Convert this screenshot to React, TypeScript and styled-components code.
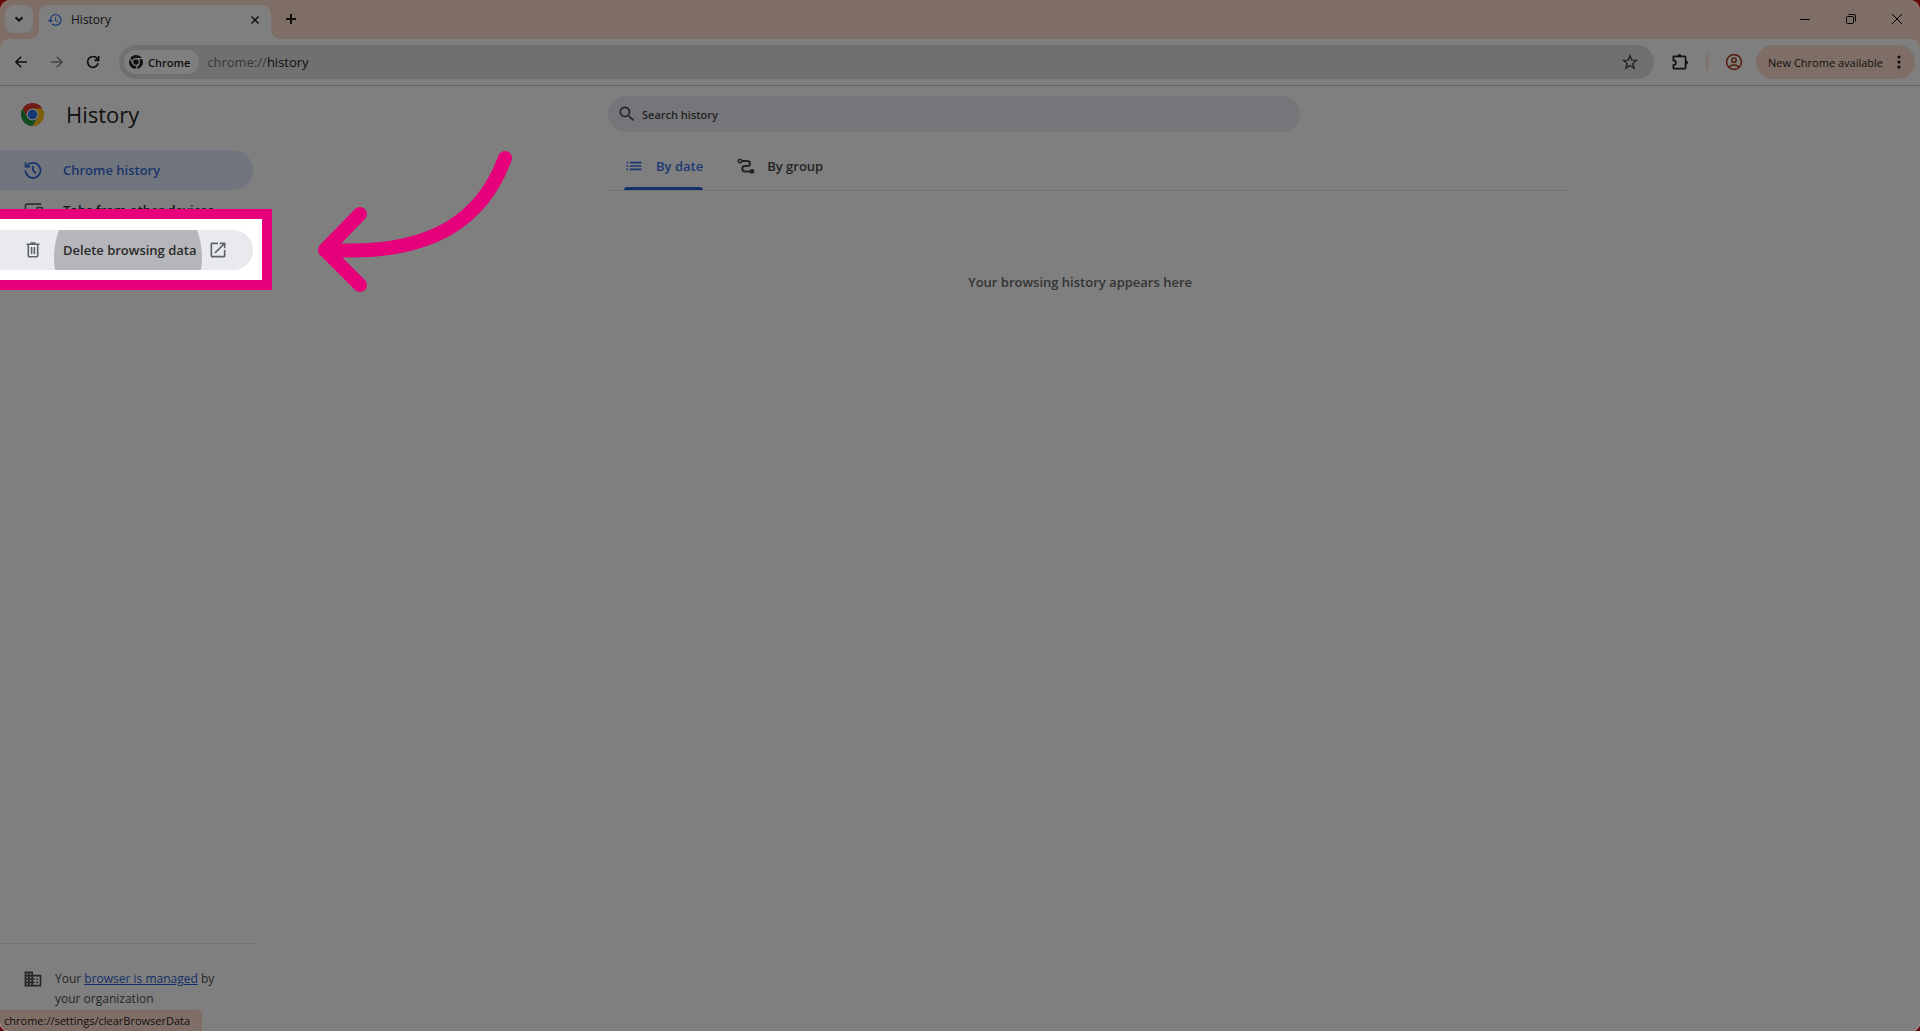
import React from "react";
import styled, { createGlobalStyle } from "styled-components";
import { MdHistory, MdDevices, MdLaunch, MdDomain, MdSearch, MdList } from "react-icons/md";

const GlobalStyle = createGlobalStyle`
  *, *::before, *::after { box-sizing: border-box; }
  body { margin: 0; background: #640a0f; }
  body, button, input { font-family: "Open Sans", "Noto Sans", sans-serif; }
  button { border: 0; padding: 0; background: none; color: inherit; }
  svg { display: block; flex: none; }
`;

const Window = styled.div`
  position: relative;
  display: flex;
  flex-direction: column;
  min-height: 100vh;
  overflow: hidden;
  border-radius: 10px 10px 8px 8px;
  background: #ffdccb;
  color: #1f1f1f;
`;

const TitleBar = styled.header`
  display: flex;
  align-items: flex-end;
  height: 39px;
  padding-left: 5px;
`;

const TabSearch = styled.button`
  display: grid;
  place-items: center;
  width: 28px;
  height: 28px;
  margin: 0 6px 6px 0;
  border-radius: 9px;
  background: #fff;
`;

const Tab = styled.div`
  position: relative;
  display: flex;
  align-items: center;
  width: 232px;
  height: 34px;
  padding: 0 8px 5px;
  border-radius: 9px 9px 0 0;
  background: #fff;
  font-size: 12px;

  &::before, &::after {
    content: "";
    position: absolute;
    bottom: 0;
    width: 10px;
    height: 10px;
  }
  &::before { left: -10px; background: radial-gradient(circle at 0 0, transparent 10px, #fff 10px); }
  &::after { right: -10px; background: radial-gradient(circle at 100% 0, transparent 10px, #fff 10px); }
`;

const TabTitle = styled.span`
  flex: 1;
  padding-left: 8px;
`;

const SmallButton = styled.button`
  display: grid;
  place-items: center;
  width: 16px;
  height: 16px;
`;

const NewTab = styled.button`
  display: grid;
  place-items: center;
  width: 28px;
  height: 28px;
  margin: 0 auto 6px 6px;
`;

const WindowControls = styled.div`
  display: flex;
  align-self: stretch;
`;

const WindowButton = styled.button`
  display: grid;
  place-items: center;
  width: 46px;
  height: 38px;
  color: #000;
`;

const Toolbar = styled.div`
  display: flex;
  align-items: center;
  height: 47px;
  padding: 0 5px 0 3px;
  border-bottom: 1px solid #c8c8c8;
  border-radius: 9px 9px 0 0;
  background: #fff;
`;

const NavButton = styled.button<{ $muted?: boolean }>`
  display: grid;
  place-items: center;
  width: 36px;
  height: 34px;
  color: ${(p) => (p.$muted ? "#8c8c8c" : "#1f1f1f")};
`;

const Omnibox = styled.div`
  display: flex;
  flex: 1;
  align-items: center;
  height: 34px;
  margin: 0 8px;
  padding: 0 16px 0 5px;
  border-radius: 17px;
  background: #e1e1e1;
`;

const SiteChip = styled.button`
  display: flex;
  align-items: center;
  gap: 5px;
  height: 24px;
  padding: 0 9px 0 5px;
  border-radius: 12px;
  background: #fff;
  font-size: 11px;
  font-weight: 600;
`;

const Address = styled.div`
  flex: 1;
  padding-left: 8px;
  font-size: 13px;
  color: #707070;

  b { font-weight: 400; color: #1f1f1f; }
`;

const Divider = styled.span`
  width: 2px;
  height: 16px;
  margin: 0 8px;
  background: #ffdccb;
`;

const UpdateButton = styled.button`
  display: flex;
  align-items: center;
  gap: 12px;
  height: 34px;
  margin-left: 4px;
  padding: 0 12px;
  border-radius: 17px;
  background: #ffdccb;
  font-size: 11px;
`;

const Page = styled.div`
  display: flex;
  flex: 1;
  background: #fff;
`;

const Sidebar = styled.aside`
  display: flex;
  flex-direction: column;
  width: 256px;
`;

const Brand = styled.div`
  display: flex;
  align-items: center;
  gap: 22px;
  height: 64px;
  padding: 0 0 8px 21px;
`;

const Heading = styled.h1`
  margin: 0;
  font-size: 22px;
  font-weight: 500;
  line-height: 28px;
`;

const NavItem = styled.a<{ $tone?: "active" | "pressed" }>`
  position: relative;
  display: flex;
  align-items: center;
  height: 40px;
  margin-right: 3px;
  padding-left: 23px;
  border-radius: 0 20px 20px 0;
  background: ${(p) => (p.$tone === "active" ? "#e3edfd" : p.$tone === "pressed" ? "#e8eaed" : "transparent")};
  color: ${(p) => (p.$tone === "active" ? "#3367d6" : "#2a2a2a")};
  font-size: 13px;
  font-weight: 600;
  text-decoration: none;
  white-space: nowrap;
`;

const NavIcon = styled.span<{ $active?: boolean }>`
  display: grid;
  place-items: center;
  width: 20px;
  margin-right: 20px;
  color: ${(p) => (p.$active ? "#3367d6" : "#5f6368")};
`;

const NavLabel = styled.span`
  position: relative;
  flex: 1;
`;

const NavEnd = styled.span`
  margin-right: 25px;
  color: #5f6368;
`;

const Ripple = styled.span`
  position: absolute;
  inset: 0;
  overflow: hidden;

  &::before {
    content: "";
    position: absolute;
    top: -47px;
    left: 54px;
    width: 148px;
    height: 148px;
    border-radius: 50%;
    background: #b5b6b9;
  }
`;

/* Tour step: frames one entry and dims everything around it. */
const Spotlight = styled.span`
  position: absolute;
  z-index: 5;
  top: -21px;
  bottom: -20px;
  left: 0;
  width: 272px;
  border: 10px solid #e6007a;
  border-left: 0;
  box-shadow: 0 0 0 4000px rgba(0, 0, 0, 0.5);
  pointer-events: none;
`;

const Pointer = styled.svg`
  position: absolute;
  z-index: 6;
  top: -84px;
  left: 312px;
  pointer-events: none;
`;

const Managed = styled.footer`
  display: flex;
  gap: 12px;
  margin-top: auto;
  padding: 25px 30px 22px 23px;
  border-top: 1px solid #e0e0e0;
  color: #4a4d51;
  font-size: 12px;
  line-height: 20px;

  a { color: #2a5fd0; }
`;

const Content = styled.main`
  flex: 1;
  padding-top: 10px;
`;

const Column = styled.div`
  width: 960px;
  max-width: 100%;
  margin: 0 auto;
`;

const SearchBox = styled.label`
  display: flex;
  align-items: center;
  gap: 5px;
  max-width: 692px;
  height: 36px;
  padding: 0 9px;
  border-radius: 18px;
  background: #ebedf5;
  color: #474747;

  input {
    flex: 1;
    border: 0;
    padding: 0;
    outline: 0;
    background: none;
    color: inherit;
    font-size: 11px;
    font-weight: 600;
  }
  input::placeholder { color: #474747; opacity: 1; }
`;

const Tabs = styled.div`
  display: flex;
  gap: 34px;
  height: 59px;
  padding: 10px 16px 0;
  border-bottom: 1px solid #e8e8e8;
`;

const ViewTab = styled.button<{ $active?: boolean }>`
  position: relative;
  display: flex;
  align-items: center;
  gap: 12px;
  color: ${(p) => (p.$active ? "#3b73e8" : "#474747")};
  font-size: 13px;
  font-weight: 600;

  &::after {
    content: "";
    position: absolute;
    right: 0;
    bottom: 0;
    left: 0;
    height: 3px;
    border-radius: 3px 3px 0 0;
    background: ${(p) => (p.$active ? "#2a62d6" : "transparent")};
  }
`;

const Empty = styled.p`
  margin: 81px 16px 0 0;
  color: #6a6a6a;
  font-size: 13px;
  font-weight: 600;
  line-height: 20px;
  text-align: center;
`;

const StatusBubble = styled.div`
  position: absolute;
  bottom: 0;
  left: 0;
  padding: 0 12px 0 4px;
  border-radius: 0 4px 0 0;
  background: #ffdccb;
  font-size: 11px;
  line-height: 21px;
`;

const line = { fill: "none", stroke: "currentColor" } as const;

const ChromeLogo = () => (
  <svg width="23" height="23" viewBox="0 0 48 48" aria-hidden="true">
    <path d="M3.2 12A24 24 0 0 1 44.8 12H24A12 12 0 0 0 13.6 30Z" fill="#e33b2e" />
    <path d="M44.8 12A24 24 0 0 1 24 48L34.4 30A12 12 0 0 0 24 12Z" fill="#fbc116" />
    <path d="M3.2 12A24 24 0 0 0 24 48L34.4 30A12 12 0 0 1 13.6 30Z" fill="#229342" />
    <circle cx="24" cy="24" r="12" fill="#fff" />
    <circle cx="24" cy="24" r="10" fill="#2f6fe8" />
  </svg>
);

const ChromeMark = () => (
  <svg width="14" height="14" viewBox="0 0 48 48" aria-hidden="true">
    <circle cx="24" cy="24" r="24" fill="#1f1f1f" />
    <g fill="none" stroke="#fff" strokeWidth="4">
      <circle cx="24" cy="24" r="11.5" />
      <path d="M24 12.5H46M14 30L3 11M34 30L23 49" />
    </g>
  </svg>
);

const HistoryIcon = () => (
  <svg width="18" height="18" viewBox="0 0 18 18" {...line} strokeWidth="1.8" aria-hidden="true">
    <path d="M1.5 9.5A7.5 7.5 0 1 0 3.2 4.7" />
    <path d="M1.6 1.3v4.4h4.7" />
    <path d="M9 5v4.3l3 3" />
  </svg>
);

const TrashIcon = () => (
  <svg width="14" height="16" viewBox="0 0 14 16" {...line} strokeWidth="1.6" aria-hidden="true">
    <path d="M0.5 2.2h13M4.5 1h5M2.3 2.5v11a1.2 1.2 0 0 0 1.2 1.2h7a1.2 1.2 0 0 0 1.2-1.2v-11M5.6 5v7M8.4 5v7" />
  </svg>
);

const RouteIcon = () => (
  <svg width="18" height="18" viewBox="0 0 18 18" {...line} strokeWidth="2" aria-hidden="true">
    <circle cx="3" cy="4" r="1.7" strokeWidth="1.6" />
    <path d="M5 4h5.5a2.5 2.5 0 0 1 0 5H8a2.6 2.6 0 0 0 0 5.4h6" />
    <circle cx="15" cy="14.4" r="2.4" fill="currentColor" stroke="none" />
  </svg>
);

const App = () => (
  <>
    <GlobalStyle />
    <Window>
      <TitleBar>
        <TabSearch aria-label="Search tabs">
          <svg width="10" height="10" viewBox="0 0 10 10" {...line} strokeWidth="2"><path d="M1.5 3.2 5 6.7l3.5-3.5" /></svg>
        </TabSearch>
        <Tab>
          <MdHistory size={16} color="#3b73e8" />
          <TabTitle>History</TabTitle>
          <SmallButton aria-label="Close tab">
            <svg width="8" height="8" viewBox="0 0 8 8" {...line} strokeWidth="1.4"><path d="M.5.5l7 7M7.5.5l-7 7" /></svg>
          </SmallButton>
        </Tab>
        <NewTab aria-label="New tab">
          <svg width="10" height="10" viewBox="0 0 10 10" {...line} strokeWidth="2"><path d="M5 0v10M0 5h10" /></svg>
        </NewTab>
        <WindowControls>
          <WindowButton aria-label="Minimize">
            <svg width="10" height="10" viewBox="0 0 10 10" {...line}><path d="M0 5.5h10" /></svg>
          </WindowButton>
          <WindowButton aria-label="Restore">
            <svg width="10" height="10" viewBox="0 0 10 10" {...line}>
              <rect x=".5" y="2.5" width="7" height="7" rx="1" />
              <path d="M2.5.5H8A1.5 1.5 0 0 1 9.5 2v5.5" />
            </svg>
          </WindowButton>
          <WindowButton aria-label="Close">
            <svg width="10" height="10" viewBox="0 0 10 10" {...line}><path d="M0 0l10 10M10 0L0 10" /></svg>
          </WindowButton>
        </WindowControls>
      </TitleBar>

      <Toolbar>
        <NavButton aria-label="Back">
          <svg width="12" height="12" viewBox="0 0 12 12" {...line} strokeWidth="1.6"><path d="M12 6H1.2M6.2.7.9 6l5.3 5.3" /></svg>
        </NavButton>
        <NavButton $muted aria-label="Forward">
          <svg width="12" height="12" viewBox="0 0 12 12" {...line} strokeWidth="1.6"><path d="M0 6h10.8M5.8.7 11.1 6l-5.3 5.3" /></svg>
        </NavButton>
        <NavButton aria-label="Reload">
          <svg width="14" height="14" viewBox="0 0 14 14" {...line} strokeWidth="1.7"><path d="M12.2 8.3A5.4 5.4 0 1 1 11.2 3.5L12.5 5M12.6 1v4.3H8.3" /></svg>
        </NavButton>
        <Omnibox>
          <SiteChip><ChromeMark />Chrome</SiteChip>
          <Address>chrome://<b>history</b></Address>
          <SmallButton aria-label="Bookmark this tab">
            <svg width="16" height="16" viewBox="0 0 16 16" fill="none" stroke="#474747" strokeWidth="1.4">
              <path d="M8 1.7l1.8 4.4 4.7.3-3.6 3 1.2 4.7L8 11.5l-4.1 2.6 1.2-4.7-3.6-3 4.7-.3z" />
            </svg>
          </SmallButton>
        </Omnibox>
        <NavButton aria-label="Extensions">
          <svg width="18" height="18" viewBox="0 0 18 18" {...line} strokeWidth="1.7">
            <path d="M3 3.4h10.6a1 1 0 0 1 1 1v10.2a1 1 0 0 1-1 1H3a.6.6 0 0 1-.6-.6v-2.9a2.4 2.4 0 0 0 0-4.8V4a.6.6 0 0 1 .6-.6z" />
            <path d="M7 3a1.5 1.5 0 0 1 3 0zM15 8a1.5 1.5 0 0 1 0 3z" fill="currentColor" strokeWidth="1" />
          </svg>
        </NavButton>
        <Divider />
        <NavButton aria-label="Profile">
          <svg width="18" height="18" viewBox="0 0 18 18" fill="none" stroke="#a84020" strokeWidth="1.6">
            <circle cx="9" cy="9" r="7.4" />
            <circle cx="9" cy="7.2" r="2.2" />
            <path d="M3.8 14a7.6 7.6 0 0 1 10.4 0" />
          </svg>
        </NavButton>
        <UpdateButton>
          New Chrome available
          <svg width="8" height="16" viewBox="0 0 8 16" fill="currentColor">
            <circle cx="4" cy="3" r="1.6" /><circle cx="4" cy="8" r="1.6" /><circle cx="4" cy="13" r="1.6" />
          </svg>
        </UpdateButton>
      </Toolbar>

      <Page>
        <Sidebar>
          <Brand><ChromeLogo /><Heading>History</Heading></Brand>
          <nav>
            <NavItem href="#history" $tone="active">
              <NavIcon $active><HistoryIcon /></NavIcon><NavLabel>Chrome history</NavLabel>
            </NavItem>
            <NavItem href="#devices">
              <NavIcon><MdDevices size={20} /></NavIcon><NavLabel>Tabs from other devices</NavLabel>
            </NavItem>
            <NavItem href="#clear" $tone="pressed">
              <Ripple />
              <NavIcon><TrashIcon /></NavIcon>
              <NavLabel>Delete browsing data</NavLabel>
              <NavEnd><MdLaunch size={20} /></NavEnd>
              <Spotlight />
              <Pointer width="204" height="150" viewBox="312 146 204 150" fill="none" stroke="#e6007a" strokeWidth="14" strokeLinecap="round" strokeLinejoin="round">
                <path d="M505 158C484 216 436 256 330 250M360 214l-35 36 35 35" />
              </Pointer>
            </NavItem>
          </nav>
          <Managed>
            <MdDomain size={20} />
            <span>Your <a href="#managed">browser is managed</a> by<br />your organization</span>
          </Managed>
        </Sidebar>
        <Content>
          <Column>
            <SearchBox>
              <MdSearch size={20} />
              <input type="search" placeholder="Search history" aria-label="Search history" />
            </SearchBox>
            <Tabs role="tablist">
              <ViewTab role="tab" aria-selected="true" $active><MdList size={20} />By date</ViewTab>
              <ViewTab role="tab" aria-selected="false"><RouteIcon />By group</ViewTab>
            </Tabs>
            <Empty>Your browsing history appears here</Empty>
          </Column>
        </Content>
      </Page>
      <StatusBubble>chrome://settings/clearBrowserData</StatusBubble>
    </Window>
  </>
);

export default App;
